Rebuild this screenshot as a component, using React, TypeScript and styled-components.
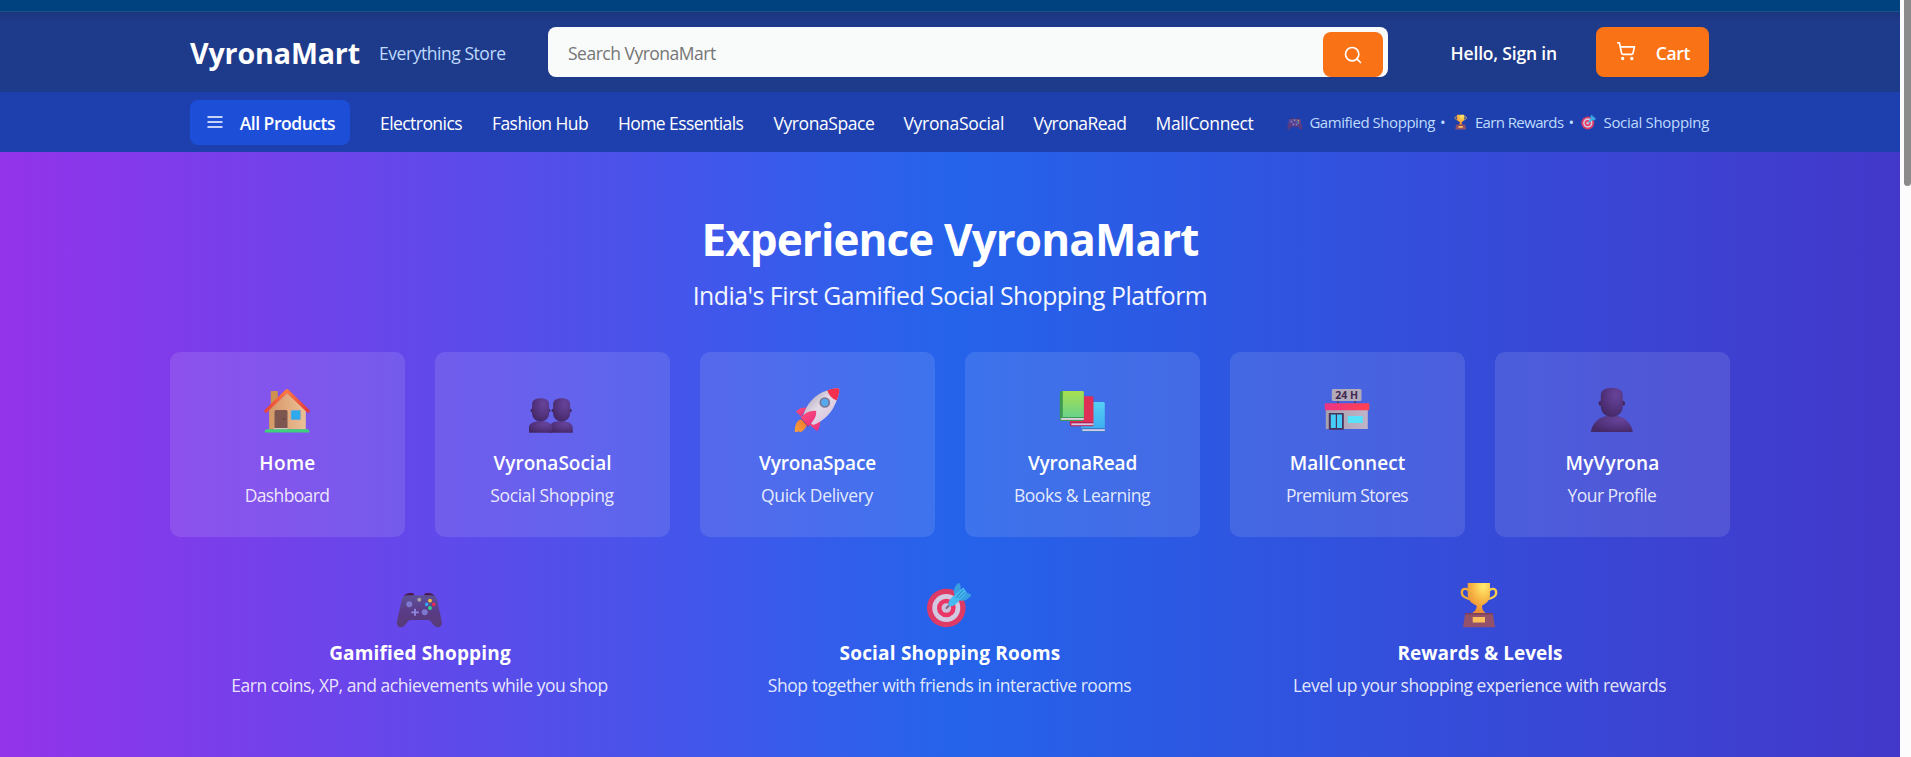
import React from 'react';
import styled, { createGlobalStyle } from 'styled-components';
import { Search, ShoppingCart } from 'lucide-react';

const GlobalStyle = createGlobalStyle`
  *, *::before, *::after { box-sizing: border-box; }
  html, body { margin: 0; height: 100%; overflow: hidden; }
  body {
    font-family: 'Segoe UI', 'Open Sans', 'Noto Sans', sans-serif;
    color: #fff;
    background: #fcfcfc;
  }
  h1, h2, h3, p { margin: 0; }
  button, input { font: inherit; color: inherit; border: 0; }
`;

const Window = styled.div`
  display: flex;
  height: 757px;
`;

const Page = styled.div`
  flex: 1;
  display: flex;
  flex-direction: column;
  min-width: 0;
`;

const ScrollTrack = styled.div`
  width: 11px;
  padding-left: 4px;
  background: #fcfcfc;
`;

const ScrollThumb = styled.div`
  height: 186px;
  background: #8b8b8b;
  border-radius: 0 0 4px 4px;
`;

const TopStrip = styled.div`
  flex: none;
  height: 12px;
  background: #004180;
  border-bottom: 1px solid #1a508c;
`;

const Header = styled.header`
  flex: none;
  height: 80px;
  background: linear-gradient(to bottom, #1e367f 0, #1e3a8a 10px);
`;

const Bar = styled.div`
  width: 1520px;
  height: 100%;
  margin: 0 auto;
  display: flex;
  align-items: center;
`;

const Label = styled.span<{ $ls?: number; $bold?: boolean }>`
  font-size: 17.5px;
  line-height: 24px;
  padding-top: 1px;
  font-weight: ${(p) => (p.$bold ? 600 : 400)};
  letter-spacing: ${(p) => p.$ls ?? 0}px;
  white-space: nowrap;
`;

const Logo = styled.h1`
  width: 189px;
  padding-top: 2px;
  font-size: 28.6px;
  line-height: 40px;
  font-weight: 700;
  letter-spacing: -0.12px;
`;

const Tagline = styled(Label)`
  width: 169px;
  color: #bfdbfe;
`;

const SearchBox = styled.form`
  width: 840px;
  height: 50px;
  display: flex;
  align-items: flex-end;
  padding-right: 5px;
  border-radius: 8px;
  overflow: hidden;
  background: #f9fbfb;
`;

const SearchInput = styled.input`
  flex: 1;
  height: 50px;
  padding: 2px 20px 0;
  background: transparent;
  outline: none;
  font-size: 17.5px;
  letter-spacing: -0.5px;
  color: #111827;
  &::placeholder { color: #757575; opacity: 1; }
`;

const SearchButton = styled.button`
  width: 60px;
  height: 45px;
  padding: 0;
  display: grid;
  place-items: center;
  border-radius: 8px;
  background: #f97316;
`;

const Account = styled.div`
  margin-left: auto;
  margin-right: 1px;
  display: flex;
  align-items: center;
  gap: 39px;
`;

const CartButton = styled.button`
  width: 113px;
  height: 50px;
  padding: 0 19px 0 20px;
  display: flex;
  align-items: center;
  justify-content: space-between;
  border-radius: 8px;
  background: #f97316;
  & > svg { margin-bottom: 2px; }
`;

const Nav = styled.nav`
  flex: none;
  height: 60px;
  background: #1e40af;
`;

const AllProducts = styled.button`
  flex: none;
  width: 160px;
  height: 45px;
  margin-right: 30px;
  padding: 0 15px;
  display: flex;
  align-items: center;
  justify-content: space-between;
  border-radius: 8px;
  background: #1d4ed8;
`;

const Links = styled.div`
  display: flex;
  gap: 30px;
`;

const NavLink = styled(Label)<{ $w: number }>`
  flex: none;
  width: ${(p) => p.$w}px;
  padding-top: 2px;
`;

const Promo = styled.div`
  margin-left: auto;
  display: flex;
  align-items: center;
  color: #bfdbfe;
  font-size: 15px;
  line-height: 22px;
`;

const PromoText = styled.span<{ $ls: number }>`
  padding: 0 1px 0 6px;
  letter-spacing: ${(p) => p.$ls}px;
  white-space: nowrap;
`;

const Dot = styled.span`
  width: 17px;
  padding-left: 4px;
`;

const Hero = styled.main`
  flex: 1;
  display: flex;
  flex-direction: column;
  align-items: center;
  padding-top: 60px;
  background: linear-gradient(to right, #9333ea, #2563eb, #4338ca);
`;

const Title = styled.h2`
  font-size: 44px;
  line-height: 54px;
  font-weight: 700;
  letter-spacing: -0.9px;
`;

const Subtitle = styled.p`
  margin-top: 11px;
  font-size: 24.8px;
  line-height: 36px;
  letter-spacing: -0.48px;
  color: #f4f6fe;
`;

const Cards = styled.section`
  margin-top: 39px;
  display: grid;
  grid-template-columns: repeat(6, 235px);
  gap: 30px;
`;

const Card = styled.article`
  height: 185px;
  padding-top: 34px;
  display: flex;
  flex-direction: column;
  align-items: center;
  border-radius: 10px;
  background: rgba(255, 255, 255, 0.11);
`;

const Features = styled.section`
  margin-top: 44px;
  display: grid;
  grid-template-columns: repeat(3, 500px);
  gap: 30px;
`;

const Feature = styled.article`
  display: flex;
  flex-direction: column;
  align-items: center;
`;

const ItemTitle = styled.h3<{ $ls: number; $feature?: boolean }>`
  margin-top: ${(p) => (p.$feature ? 10 : 15)}px;
  font-size: 19px;
  line-height: 28px;
  font-weight: ${(p) => (p.$feature ? 700 : 600)};
  letter-spacing: ${(p) => p.$ls}px;
`;

const ItemText = styled.p<{ $ls: number }>`
  margin-top: 5px;
  padding-right: 1px;
  font-size: 17.5px;
  line-height: 27px;
  letter-spacing: ${(p) => p.$ls}px;
  color: rgba(255, 255, 255, 0.87);
`;

const Picture = styled.svg`
  display: block;
  flex: none;
`;

type IconProps = { size?: number };

const Emoji = ({ size = 48, left = 0.7, children }: IconProps & { left?: number; children: React.ReactNode }) => (
  <Picture width={size} height={size} viewBox={`${left} 0 48 48`} aria-hidden="true">
    {children}
  </Picture>
);

const MenuIcon = () => (
  <Picture width={20} height={20} viewBox="0 0 24 24" fill="none" stroke="#fff" strokeWidth={2}>
    <path d="M3 6h18M3 12h18M3 18h18" />
  </Picture>
);

const House = () => (
  <Emoji>
    <defs>
      <linearGradient id="wall"><stop stopColor="#d19a63" /><stop offset=".3" stopColor="#dda275" /><stop offset="1" stopColor="#eac197" /></linearGradient>
      <linearGradient id="roof"><stop stopColor="#e5433d" /><stop offset=".5" stopColor="#ff7a3d" /><stop offset="1" stopColor="#e0393f" /></linearGradient>
    </defs>
    <rect x="7.5" y="5" width="7" height="16" fill="#cf9150" />
    <path d="M5.8 24 23.7 7l18.8 17v19.5H5.8z" fill="url(#wall)" />
    <path d="M11.2 43V25.5a1.5 1.5 0 0 1 1.5-1.5h10a1.5 1.5 0 0 1 1.500 1.500V43z" fill="#7d564f" />
    <circle cx="20.6" cy="33" r=".8" fill="#4e302d" />
    <rect x="27.5" y="24" width="10" height="10" rx=".8" fill="#2fa9ee" stroke="#e0a98b" strokeWidth=".7" />
    <path d="M10.5 42h14v1.6h-14z" fill="#d8c3bf" />
    <path d="M2.700 25 23.700 4.700 44.800 25" fill="none" stroke="url(#roof)" strokeWidth="3.400" strokeLinecap="round" strokeLinejoin="round" />
    <path d="M3.5 43.2H44a2 2 0 0 1 2 2v1.2H1.5v-1.2a2 2 0 0 1 2-2z" fill="#3fd07d" />
  </Emoji>
);

const PurpleShade = ({ id }: { id: string }) => (
  <defs>
    <radialGradient id={id} cx=".68" cy=".25" r=".8">
      <stop stopColor="#68439a" /><stop offset=".55" stopColor="#553581" /><stop offset="1" stopColor="#452866" />
    </radialGradient>
  </defs>
);

const People = () => (
  <Emoji>
    <PurpleShade id="people" />
    <g fill="url(#people)">
      <circle cx="4.2" cy="24.6" r="2" fill="#442760" /><circle cx="20.4" cy="24.6" r="1.8" fill="#442760" />
      <circle cx="25" cy="24.6" r="1.8" fill="#442760" /><circle cx="41.4" cy="24.6" r="2" fill="#442760" />
      <path d="M21.5 46.7V40c1-3.5 5-4.8 11.500-4.800s11.500 2 11.500 6.800v4.700z" />
      <path d="M.5 46.700V42c0-4.500 4.500-6.800 11.800-6.800S24 37.500 24 42v4.700z" />
      <path d="M3.800 18.500c0-4 3-6.200 8.500-6.200s8.500 2.200 8.500 6.200v8.500c0 5-3.300 8.400-8.500 8.400s-8.500-3.400-8.500-8.400z" />
      <path d="M24.800 18.500c0-4 3-6.200 8.500-6.200s8.500 2.200 8.500 6.200v8.500c0 5-3.300 8.400-8.500 8.400s-8.500-3.400-8.500-8.400z" />
    </g>
  </Emoji>
);

const Rocket = () => (
  <Emoji>
    <defs>
      <linearGradient id="hull" x1=".2" y1=".2" x2=".8" y2=".8"><stop stopColor="#b7aec0" /><stop offset=".45" stopColor="#e3dbe8" /><stop offset="1" stopColor="#d9c4dd" /></linearGradient>
      <linearGradient id="fin" x1="0" y1="0" x2="1" y2="1"><stop stopColor="#ff5277" /><stop offset="1" stopColor="#e72a82" /></linearGradient>
      <linearGradient id="flame" x1="0" y1="1" x2="1" y2="0"><stop stopColor="#f4a23d" /><stop offset="1" stopColor="#f1762f" /></linearGradient>
    </defs>
    <path d="M8 33.500c-4 .5-6.700 4.500-6.500 12.500 1.500.5 3-.5 3.500-.8.800 1 2.500.9 3.700.3 1.800-1.500 4-3.500 4.800-6.500z" fill="url(#flame)" />
    <path d="m7.500 32 3-2.500 7 8-3 3.200z" fill="#443458" />
    <path d="M2.500 25.500c2.500-2.500 6-4.200 11-4l-5.500 9z" fill="url(#fin)" />
    <path d="M27 34.500c-.2 4.500-.8 8.500-3.300 10.800L16 38.500z" fill="url(#fin)" />
    <path d="M9.500 31C13 18 21.500 8 34 4.500 38 3 42 2.300 44.500 2.300c1 0 1.500.7 1.500 1.700-.3 6-3 12-6 18C35 30.500 28 36 20 39z" fill="url(#hull)" />
    <path d="M34 4.500c4-1.800 8-2.200 10.500-2.200 1 0 1.500.7 1.500 1.700-.2 4-1.400 7.500-2.700 10.500C38.500 12.500 35.500 9 34 4.500z" fill="#f22f4c" />
    <circle cx="31.500" cy="16.500" r="4.500" fill="#56a8ee" stroke="#7d7591" strokeWidth="1.700" />
    <path d="M22.800 25c.8 5.500-3 10.500-8 15.500L7.300 31.500C12 26.500 17 24.300 22.800 25z" fill="url(#fin)" />
  </Emoji>
);

const Books = () => (
  <Emoji>
    <defs>
      <linearGradient id="green" x2="0" y2="1"><stop stopColor="#a8df50" /><stop offset="1" stopColor="#69d389" /></linearGradient>
      <linearGradient id="blue" x2="0" y2="1"><stop stopColor="#55d0f5" /><stop offset="1" stopColor="#3dadef" /></linearGradient>
    </defs>
    <rect x="22.800" y="16" width="23.700" height="27.500" rx="1.500" fill="url(#blue)" />
    <rect x="22.800" y="42" width="23.700" height="4" rx="1" fill="#357dc6" />
    <rect x="24" y="43.200" width="22.500" height="1.800" fill="#dac9e8" />
    <rect x="11.500" y="10.300" width="23.700" height="27" rx="1.500" fill="#de2f57" />
    <rect x="11.500" y="36" width="23.700" height="4.200" rx="1.500" fill="#b22157" />
    <rect x="13" y="37.300" width="22.200" height="1.900" fill="#d9c5de" />
    <rect x="1.500" y="5" width="24" height="30" rx="1.800" fill="#3d9a51" />
    <path d="M4.500 5h19.800a1.200 1.200 0 0 1 1.200 1.200V31h-21z" fill="url(#green)" />
    <rect x="2.800" y="32" width="22.700" height="1.900" fill="#dccfe2" />
  </Emoji>
);

const Store = () => (
  <Emoji>
    <defs>
      <linearGradient id="awning"><stop stopColor="#ed3486" /><stop offset="1" stopColor="#ff424f" /></linearGradient>
      <linearGradient id="facade"><stop stopColor="#a8a0ad" /><stop offset="1" stopColor="#bfb4c9" /></linearGradient>
    </defs>
    <path d="M14.500 14v5M31.800 14v5" stroke="#4a405a" strokeWidth="1.500" />
    <rect x="8.500" y="3" width="29.700" height="12" rx="1.500" fill="#b2aab9" />
    <text x="23.400" y="12.700" textAnchor="middle" fontFamily="Open Sans, sans-serif" fontWeight="700" fontSize="10.500" fill="#402751">24 H</text>
    <rect x="2.500" y="22" width="42" height="21" fill="url(#facade)" />
    <rect x="1.500" y="17.300" width="44.500" height="7" rx="1" fill="url(#awning)" />
    <rect x="5.500" y="27" width="15" height="16.800" rx=".6" fill="#48305b" />
    <path d="M7.500 28.500h5V42h-5zM13.700 28.500h5V42h-5z" fill="#45cdf7" />
    <path d="M24.500 30h15v7h-15z" fill="#59e2fc" />
  </Emoji>
);

const Profile = () => (
  <Emoji>
    <PurpleShade id="profile" />
    <circle cx="12.800" cy="17.300" r="2.500" fill="#442760" />
    <circle cx="34.200" cy="17.300" r="2.500" fill="#442760" />
    <path d="M2.500 46C4 36 12 29.500 23.500 29.500S43 36 44.500 46z" fill="url(#profile)" />
    <path d="M12.500 9.500c0-5 4-7.800 11-7.800s11 2.800 11 7.800V20c0 6.500-4.300 10.700-11 10.700S12.500 26.500 12.500 20z" fill="url(#profile)" />
  </Emoji>
);

const Gamepad = ({ size }: IconProps) => (
  <Emoji size={size} left={0}>
    <defs>
      <linearGradient id="pad" x2="0" y2="1"><stop stopColor="#5c5197" /><stop offset=".5" stopColor="#5a3b87" /><stop offset="1" stopColor="#573b78" /></linearGradient>
    </defs>
    <path d="M7.500 16c1-2.800 4-4.300 8-4 1.800 0 2.800.8 3 2.500zM39 16c-1-2.800-4-4.300-8-4-1.800 0-2.800.8-3 2.500z" fill="#4a1b48" />
    <path d="M11.500 14.300h24c3 0 5 1.700 5.600 4.500l4.600 21.500c.7 4-1.500 6.500-4.500 6-2-.3-3-1.500-4.500-3.500-1.700-2.300-3-3.800-5.500-3.800H15.500c-2.500 0-3.800 1.500-5.500 3.800-1.500 2-2.500 3.200-4.500 3.500-3 .5-5.200-2-4.500-6l4.800-21.500c.6-2.800 2.700-4.500 5.700-4.500z" fill="url(#pad)" />
    <circle cx="13.300" cy="23.300" r="3" fill="#7f78d0" />
    <circle cx="28.700" cy="31.300" r="3" fill="#7f78d0" />
    <path d="M19 27.800v7M15.300 31.300h7.400" stroke="#9089df" strokeWidth="1.800" />
    <circle cx="23.200" cy="18.700" r="2" fill="#a79dac" />
    <circle cx="34" cy="19.700" r="1.900" fill="#f7bd43" />
    <circle cx="30.700" cy="23.400" r="1.800" fill="#35a4f3" />
    <circle cx="37.700" cy="23.400" r="1.800" fill="#f02a4e" />
    <circle cx="34" cy="27" r="1.900" fill="#2fd888" />
  </Emoji>
);

const Target = ({ size }: IconProps) => (
  <Emoji size={size} left={0}>
    <circle cx="20.300" cy="27" r="19.300" fill="#dd3a66" />
    <circle cx="20.300" cy="27" r="14" fill="#d3c8e2" />
    <circle cx="20.300" cy="27" r="9.300" fill="#ea3565" />
    <circle cx="20.300" cy="27" r="4.800" fill="#d0bfd8" />
    <path d="m20.500 27 5-5" stroke="#766a87" strokeWidth="2" strokeLinecap="round" />
    <path d="M28 13c-1-3.500.5-7.500 4-10.800 1.200-.6 2.500 1 2.600 3.300v6.200l5.800.3c2.500.1 4.500.9 4.800 2.200-2.500 4-7.500 6.300-11 5.300z" fill="#389fe3" />
    <path d="M22.500 21.500c-1 2.800 1.200 4.500 4 3.600 3.500-1.200 7.500-6 14.500-13.600L37.200 6.500C30 13 24 17 22.500 21.500z" fill="#45baf0" />
    <path d="m30.500 16.500 6.500-7.500M33.500 17l6-6" stroke="#2672ba" strokeWidth=".9" strokeLinecap="round" />
  </Emoji>
);

const Trophy = ({ size }: IconProps) => (
  <Emoji size={size} left={0}>
    <defs>
      <radialGradient id="gold" cx=".7" cy=".1" r=".9"><stop stopColor="#ffee70" /><stop offset=".5" stopColor="#f8ba47" /><stop offset="1" stopColor="#ec8b35" /></radialGradient>
    </defs>
    <path d="M12.500 9.500C11 7.200 5.800 7 5.800 11.500c0 4 4.700 6.200 9.200 6.500" fill="none" stroke="#f0ad38" strokeWidth="2.300" />
    <path d="M33.500 9.500c1.500-2.300 6.700-2.500 6.700 2 0 4-4.700 6.200-9.200 6.500" fill="none" stroke="#f8ce4a" strokeWidth="2.300" />
    <path d="M11.700 2H34v11.500c0 6-3.500 9-8 11.200 0 3.300 1 5.300 3.700 7.300H16.300c2.700-2 4.400-4 4.400-7.300-5-2.200-9-5.200-9-11.200z" fill="url(#gold)" />
    <path d="M9.300 32h27.400L39 46.300H7z" fill="#935269" />
    <path d="M9.300 32h27.400l.2 1.500H9z" fill="#7d3f59" />
    <rect x="16.700" y="36" width="12.300" height="5.500" fill="#fbc05b" />
  </Emoji>
);

const links: { label: string; w: number; ls: number }[] = [
  { label: 'Electronics', w: 82, ls: -0.56 },
  { label: 'Fashion Hub', w: 96, ls: -0.57 },
  { label: 'Home Essentials', w: 125.5, ls: -0.59 },
  { label: 'VyronaSpace', w: 100, ls: -0.43 },
  { label: 'VyronaSocial', w: 100, ls: -0.32 },
  { label: 'VyronaRead', w: 92, ls: -0.55 },
  { label: 'MallConnect', w: 97, ls: -0.34 },
];

const cards = [
  { icon: <House />, title: 'Home', tls: 0.33, text: 'Dashboard', ls: -0.64 },
  { icon: <People />, title: 'VyronaSocial', tls: 0, text: 'Social Shopping', ls: -0.33 },
  { icon: <Rocket />, title: 'VyronaSpace', tls: -0.14, text: 'Quick Delivery', ls: -0.35 },
  { icon: <Books />, title: 'VyronaRead', tls: -0.17, text: 'Books & Learning', ls: -0.42 },
  { icon: <Store />, title: 'MallConnect', tls: 0.07, text: 'Premium Stores', ls: -0.66 },
  { icon: <Profile />, title: 'MyVyrona', tls: 0.18, text: 'Your Profile', ls: -0.56 },
];

const features = [
  { icon: <Gamepad />, title: 'Gamified Shopping', tls: 0.17, text: 'Earn coins, XP, and achievements while you shop', ls: -0.47 },
  { icon: <Target />, title: 'Social Shopping Rooms', tls: 0.19, text: 'Shop together with friends in interactive rooms', ls: -0.45 },
  { icon: <Trophy />, title: 'Rewards & Levels', tls: 0, text: 'Level up your shopping experience with rewards', ls: -0.47 },
];

export default function App() {
  return (
    <>
      <GlobalStyle />
      <Window>
        <Page>
          <TopStrip />
          <Header>
            <Bar>
              <Logo>VyronaMart</Logo>
              <Tagline $ls={-0.45}>Everything Store</Tagline>
              <SearchBox>
                <SearchInput placeholder="Search VyronaMart" />
                <SearchButton type="button" aria-label="Search">
                  <Search size={20} strokeWidth={2} color="#fff" />
                </SearchButton>
              </SearchBox>
              <Account>
                <Label $bold $ls={-0.17}>Hello, Sign in</Label>
                <CartButton>
                  <ShoppingCart size={20} strokeWidth={2} color="#fff" />
                  <Label $bold $ls={-0.35}>Cart</Label>
                </CartButton>
              </Account>
            </Bar>
          </Header>
          <Nav>
            <Bar>
              <AllProducts>
                <MenuIcon />
                <Label $bold $ls={-0.47}>All Products</Label>
              </AllProducts>
              <Links>
                {links.map((l) => (
                  <NavLink key={l.label} $w={l.w} $ls={l.ls}>{l.label}</NavLink>
                ))}
              </Links>
              <Promo>
                <Gamepad size={16} />
                <PromoText $ls={-0.45}>Gamified Shopping</PromoText>
                <Dot>•</Dot>
                <Trophy size={16} />
                <PromoText $ls={-0.62}>Earn Rewards</PromoText>
                <Dot>•</Dot>
                <Target size={16} />
                <PromoText $ls={-0.31}>Social Shopping</PromoText>
              </Promo>
            </Bar>
          </Nav>
          <Hero>
            <Title>Experience VyronaMart</Title>
            <Subtitle>India's First Gamified Social Shopping Platform</Subtitle>
            <Cards>
              {cards.map((c) => (
                <Card key={c.title}>
                  {c.icon}
                  <ItemTitle $ls={c.tls}>{c.title}</ItemTitle>
                  <ItemText $ls={c.ls}>{c.text}</ItemText>
                </Card>
              ))}
            </Cards>
            <Features>
              {features.map((f) => (
                <Feature key={f.title}>
                  {f.icon}
                  <ItemTitle $feature $ls={f.tls}>{f.title}</ItemTitle>
                  <ItemText $ls={f.ls}>{f.text}</ItemText>
                </Feature>
              ))}
            </Features>
          </Hero>
        </Page>
        <ScrollTrack>
          <ScrollThumb />
        </ScrollTrack>
      </Window>
    </>
  );
}
